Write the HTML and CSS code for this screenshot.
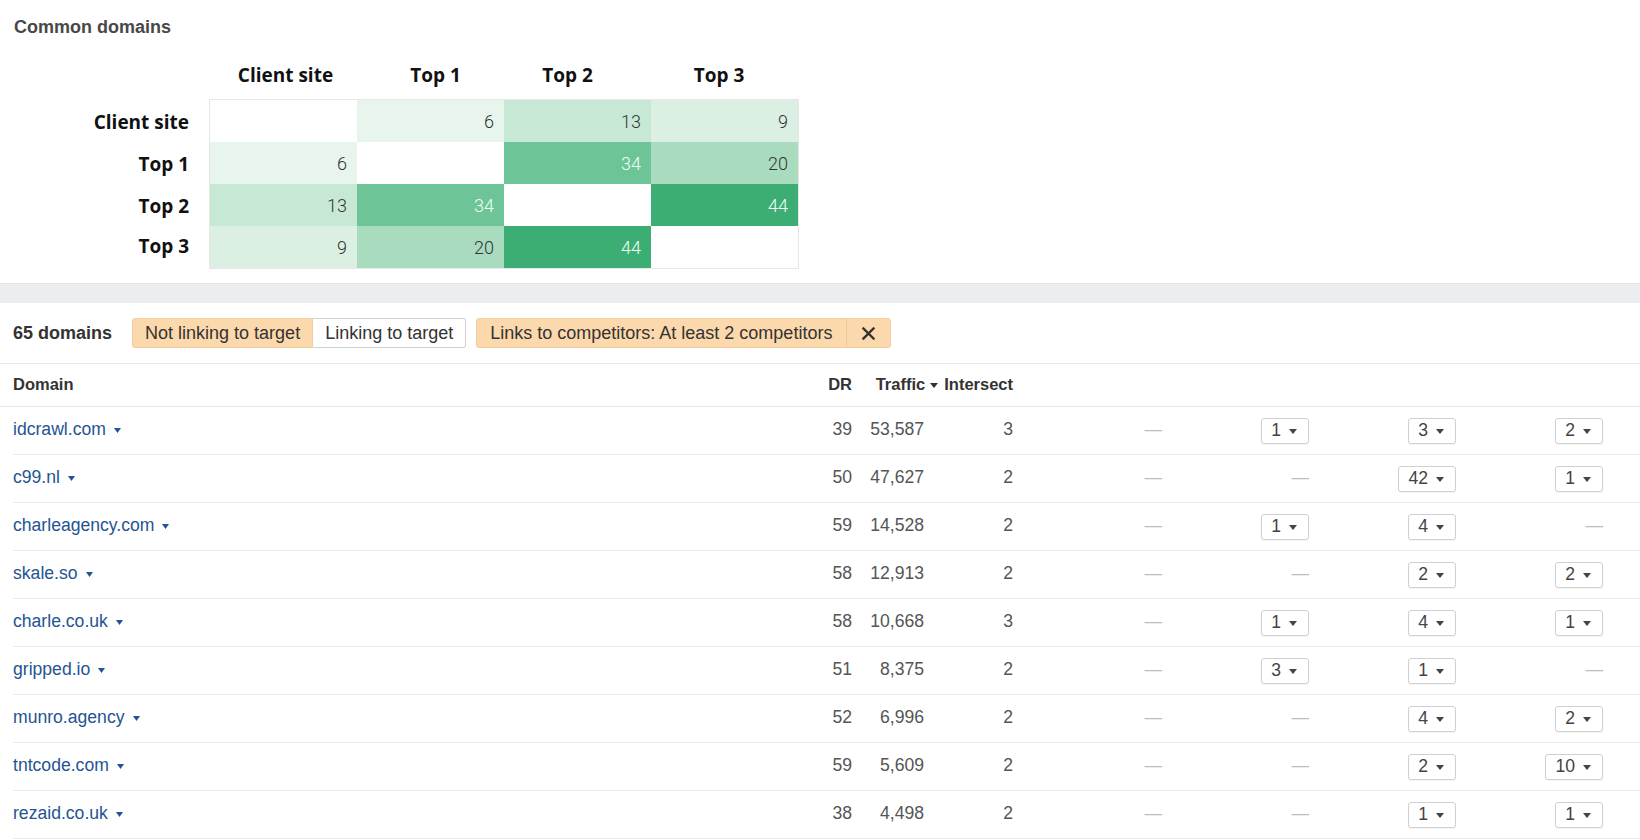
FILE: index.html
```html
<!DOCTYPE html>
<html lang="en">
<head>
<meta charset="utf-8">
<title>Common domains</title>
<link rel="stylesheet" href="styles.css">
</head>
<body>
<section class="common">
  <h2 class="title">Common domains</h2>
  <div class="matrix">
    <div class="mx-head">
      <span class="h1">Client site</span><span class="h2">Top 1</span><span class="h3">Top 2</span><span class="h4">Top 3</span>
    </div>
    <div class="mx-body">
      <div class="mx-labels">
        <span>Client site</span><span>Top 1</span><span>Top 2</span><span class="last">Top 3</span>
      </div>
      <div class="mx-grid">
        <div class="cell c0"></div><div class="cell c6">6</div><div class="cell c13">13</div><div class="cell c9">9</div>
        <div class="cell c6">6</div><div class="cell c0"></div><div class="cell c34">34</div><div class="cell c20">20</div>
        <div class="cell c13">13</div><div class="cell c34">34</div><div class="cell c0"></div><div class="cell c44">44</div>
        <div class="cell c9">9</div><div class="cell c20">20</div><div class="cell c44">44</div><div class="cell c0"></div>
      </div>
    </div>
  </div>
</section>

<div class="band"></div>

<div class="filters">
  <span class="count">65 domains</span>
  <div class="seg">
    <span class="seg-btn on">Not linking to target</span>
    <span class="seg-btn off">Linking to target</span>
  </div>
  <div class="pill">
    <span class="pill-text">Links to competitors: At least 2 competitors</span>
    <span class="pill-x"><svg width="13" height="13" viewBox="0 0 13 13"><path d="M1.5 1.5 L11.5 11.5 M11.5 1.5 L1.5 11.5" stroke="#333" stroke-width="2.4" stroke-linecap="square"/></svg></span>
  </div>
</div>

<div class="thead">
  <span>Domain</span>
  <span class="r">DR</span>
  <span class="r span2">Traffic<svg class="tri-h" width="8" height="5" viewBox="0 0 8 5"><path d="M0 0H8L4 5Z" fill="#333"/></svg>Intersect</span>
  <span></span><span></span><span></span><span></span>
</div>

<div class="tbody">
  <div class="row">
    <span class="dom">idcrawl.com<svg class="tri" width="7" height="5" viewBox="0 0 7 5"><path d="M0 0H7L3.5 5Z"/></svg></span>
    <span class="num">39</span><span class="num">53,587</span><span class="num">3</span>
    <span class="r"><span class="dash">—</span></span>
    <span class="r"><span class="dd">1<svg width="8" height="5" viewBox="0 0 8 5"><path d="M0 0H8L4 5Z"/></svg></span></span>
    <span class="r"><span class="dd">3<svg width="8" height="5" viewBox="0 0 8 5"><path d="M0 0H8L4 5Z"/></svg></span></span>
    <span class="r"><span class="dd">2<svg width="8" height="5" viewBox="0 0 8 5"><path d="M0 0H8L4 5Z"/></svg></span></span>
  </div>
  <div class="row">
    <span class="dom">c99.nl<svg class="tri" width="7" height="5" viewBox="0 0 7 5"><path d="M0 0H7L3.5 5Z"/></svg></span>
    <span class="num">50</span><span class="num">47,627</span><span class="num">2</span>
    <span class="r"><span class="dash">—</span></span>
    <span class="r"><span class="dash">—</span></span>
    <span class="r"><span class="dd">42<svg width="8" height="5" viewBox="0 0 8 5"><path d="M0 0H8L4 5Z"/></svg></span></span>
    <span class="r"><span class="dd">1<svg width="8" height="5" viewBox="0 0 8 5"><path d="M0 0H8L4 5Z"/></svg></span></span>
  </div>
  <div class="row">
    <span class="dom">charleagency.com<svg class="tri" width="7" height="5" viewBox="0 0 7 5"><path d="M0 0H7L3.5 5Z"/></svg></span>
    <span class="num">59</span><span class="num">14,528</span><span class="num">2</span>
    <span class="r"><span class="dash">—</span></span>
    <span class="r"><span class="dd">1<svg width="8" height="5" viewBox="0 0 8 5"><path d="M0 0H8L4 5Z"/></svg></span></span>
    <span class="r"><span class="dd">4<svg width="8" height="5" viewBox="0 0 8 5"><path d="M0 0H8L4 5Z"/></svg></span></span>
    <span class="r"><span class="dash">—</span></span>
  </div>
  <div class="row">
    <span class="dom">skale.so<svg class="tri" width="7" height="5" viewBox="0 0 7 5"><path d="M0 0H7L3.5 5Z"/></svg></span>
    <span class="num">58</span><span class="num">12,913</span><span class="num">2</span>
    <span class="r"><span class="dash">—</span></span>
    <span class="r"><span class="dash">—</span></span>
    <span class="r"><span class="dd">2<svg width="8" height="5" viewBox="0 0 8 5"><path d="M0 0H8L4 5Z"/></svg></span></span>
    <span class="r"><span class="dd">2<svg width="8" height="5" viewBox="0 0 8 5"><path d="M0 0H8L4 5Z"/></svg></span></span>
  </div>
  <div class="row">
    <span class="dom">charle.co.uk<svg class="tri" width="7" height="5" viewBox="0 0 7 5"><path d="M0 0H7L3.5 5Z"/></svg></span>
    <span class="num">58</span><span class="num">10,668</span><span class="num">3</span>
    <span class="r"><span class="dash">—</span></span>
    <span class="r"><span class="dd">1<svg width="8" height="5" viewBox="0 0 8 5"><path d="M0 0H8L4 5Z"/></svg></span></span>
    <span class="r"><span class="dd">4<svg width="8" height="5" viewBox="0 0 8 5"><path d="M0 0H8L4 5Z"/></svg></span></span>
    <span class="r"><span class="dd">1<svg width="8" height="5" viewBox="0 0 8 5"><path d="M0 0H8L4 5Z"/></svg></span></span>
  </div>
  <div class="row">
    <span class="dom">gripped.io<svg class="tri" width="7" height="5" viewBox="0 0 7 5"><path d="M0 0H7L3.5 5Z"/></svg></span>
    <span class="num">51</span><span class="num">8,375</span><span class="num">2</span>
    <span class="r"><span class="dash">—</span></span>
    <span class="r"><span class="dd">3<svg width="8" height="5" viewBox="0 0 8 5"><path d="M0 0H8L4 5Z"/></svg></span></span>
    <span class="r"><span class="dd">1<svg width="8" height="5" viewBox="0 0 8 5"><path d="M0 0H8L4 5Z"/></svg></span></span>
    <span class="r"><span class="dash">—</span></span>
  </div>
  <div class="row">
    <span class="dom">munro.agency<svg class="tri" width="7" height="5" viewBox="0 0 7 5"><path d="M0 0H7L3.5 5Z"/></svg></span>
    <span class="num">52</span><span class="num">6,996</span><span class="num">2</span>
    <span class="r"><span class="dash">—</span></span>
    <span class="r"><span class="dash">—</span></span>
    <span class="r"><span class="dd">4<svg width="8" height="5" viewBox="0 0 8 5"><path d="M0 0H8L4 5Z"/></svg></span></span>
    <span class="r"><span class="dd">2<svg width="8" height="5" viewBox="0 0 8 5"><path d="M0 0H8L4 5Z"/></svg></span></span>
  </div>
  <div class="row">
    <span class="dom">tntcode.com<svg class="tri" width="7" height="5" viewBox="0 0 7 5"><path d="M0 0H7L3.5 5Z"/></svg></span>
    <span class="num">59</span><span class="num">5,609</span><span class="num">2</span>
    <span class="r"><span class="dash">—</span></span>
    <span class="r"><span class="dash">—</span></span>
    <span class="r"><span class="dd">2<svg width="8" height="5" viewBox="0 0 8 5"><path d="M0 0H8L4 5Z"/></svg></span></span>
    <span class="r"><span class="dd">10<svg width="8" height="5" viewBox="0 0 8 5"><path d="M0 0H8L4 5Z"/></svg></span></span>
  </div>
  <div class="row">
    <span class="dom">rezaid.co.uk<svg class="tri" width="7" height="5" viewBox="0 0 7 5"><path d="M0 0H7L3.5 5Z"/></svg></span>
    <span class="num">38</span><span class="num">4,498</span><span class="num">2</span>
    <span class="r"><span class="dash">—</span></span>
    <span class="r"><span class="dash">—</span></span>
    <span class="r"><span class="dd">1<svg width="8" height="5" viewBox="0 0 8 5"><path d="M0 0H8L4 5Z"/></svg></span></span>
    <span class="r"><span class="dd">1<svg width="8" height="5" viewBox="0 0 8 5"><path d="M0 0H8L4 5Z"/></svg></span></span>
  </div>
</div>
</body>
</html>
```

FILE: styles.css
```css
* { box-sizing: border-box; }

html, body {
  margin: 0;
  padding: 0;
  background: #fff;
}

body {
  width: 1640px;
  height: 840px;
  overflow: hidden;
  font-family: "Liberation Sans", Arial, sans-serif;
  font-size: 17.6px;
  color: #333;
}

/* ---------- Common domains matrix ---------- */
.title {
  margin: 0;
  padding: 17px 0 0 14px;
  font-size: 18px;
  line-height: 20px;
  font-weight: bold;
  color: #484848;
}

.matrix {
  margin-top: 13px;
  font-family: "Open Sans", "Liberation Sans", sans-serif;
}

.mx-head {
  display: flex;
  align-items: center;
  height: 49px;
  padding-left: 210px;
}

.mx-head span {
  text-align: center;
  font-weight: 700;
  font-size: 19px;
  color: #111;
}

.mx-head .h1 { width: 151px; }
.mx-head .h2 { width: 149px; }
.mx-head .h3 { width: 115px; }
.mx-head .h4 { width: 188px; }

.mx-body {
  display: flex;
}

.mx-labels {
  width: 209px;
  padding: 2px 20px 0 0;
  display: flex;
  flex-direction: column;
}

.mx-labels span {
  height: 42px;
  display: flex;
  align-items: center;
  justify-content: flex-end;
  font-weight: 700;
  font-size: 19px;
  color: #111;
}

.mx-labels .last {
  padding-bottom: 5px;
}

.mx-grid {
  display: grid;
  grid-template-columns: repeat(4, 147px);
  grid-auto-rows: 42px;
  border: 1px solid #e6e8e7;
}

.cell {
  display: flex;
  align-items: center;
  justify-content: flex-end;
  padding-right: 10px;
  font-family: Roboto, "Liberation Sans", sans-serif;
  font-weight: 300;
  font-size: 18px;
  color: #333;
}

.c0 { background: #fff; }
.c6 { background: #e7f5ed; }
.c9 { background: #dbf0e3; }
.c13 { background: #c8e8d6; }
.c20 { background: #a9dcbf; }
.c34 { background: #6cc497; color: #f2fff7; }
.c44 { background: #3cae73; color: #f2fff7; }

/* ---------- separator band ---------- */
.band {
  margin-top: 14px;
  height: 20px;
  background: #ecedef;
  border-top: 1px solid #e2e3e5;
}

/* ---------- filters ---------- */
.filters {
  display: flex;
  align-items: center;
  height: 61px;
  padding-left: 13px;
  border-bottom: 1px solid #e7e7e7;
  font-size: 18px;
}

.count {
  font-weight: bold;
  margin-right: 20px;
  color: #333;
}

.seg {
  display: flex;
  height: 30px;
}

.seg-btn {
  display: flex;
  align-items: center;
  height: 30px;
  padding: 0 12px;
  border: 1px solid #d2d2d2;
  color: #333;
}

.seg-btn.on {
  background: #fcd9ac;
  border-color: #f2cd9d;
  border-radius: 3px 0 0 3px;
}

.seg-btn.off {
  background: #fff;
  border-left: none;
  border-radius: 0 3px 3px 0;
}

.pill {
  display: flex;
  height: 30px;
  margin-left: 10px;
  background: #fcd9ac;
  border: 1px solid #f2cd9d;
  border-radius: 3px;
  color: #333;
}

.pill-text {
  display: flex;
  align-items: center;
  padding: 0 14px 0 13px;
  border-right: 1px solid #efc795;
}

.pill-x {
  width: 43px;
  display: flex;
  align-items: center;
  justify-content: center;
}

/* ---------- table ---------- */
.thead,
.row {
  display: grid;
  grid-template-columns: 1fr 52px 72px 89px 149px 147px 147px 147px;
  padding-right: 37px;
  align-items: center;
}

.thead {
  height: 43px;
  padding-left: 13px;
  border-bottom: 1px solid #e7e7e7;
  font-weight: bold;
  font-size: 16.5px;
  color: #333;
}

.thead > span {
  padding-bottom: 2px;
}

.r {
  display: flex;
  justify-content: flex-end;
  align-items: center;
}

.span2 {
  grid-column: span 2;
}

.tri-h {
  margin: 2px 6px 0 5px;
}

.row {
  height: 48px;
  margin-left: 13px;
  border-bottom: 1px solid #ebebeb;
}

.dom {
  display: flex;
  align-items: center;
  color: #245592;
  padding-bottom: 3px;
}

.tri {
  margin: 3px 0 0 8px;
  fill: #245592;
}

.num {
  text-align: right;
  color: #555;
  padding-bottom: 3px;
}

.dash {
  color: #bdbdbd;
  padding-bottom: 3px;
}

.dd {
  display: inline-flex;
  align-items: center;
  gap: 8px;
  height: 26px;
  padding: 0 11px 0 9px;
  border: 1px solid #cfcfcf;
  border-radius: 3px;
  background: #fff;
  color: #444;
  box-shadow: 0 1px 0 rgba(0, 0, 0, 0.04);
}

.dd svg {
  fill: #444;
  margin-top: 1px;
}
```
